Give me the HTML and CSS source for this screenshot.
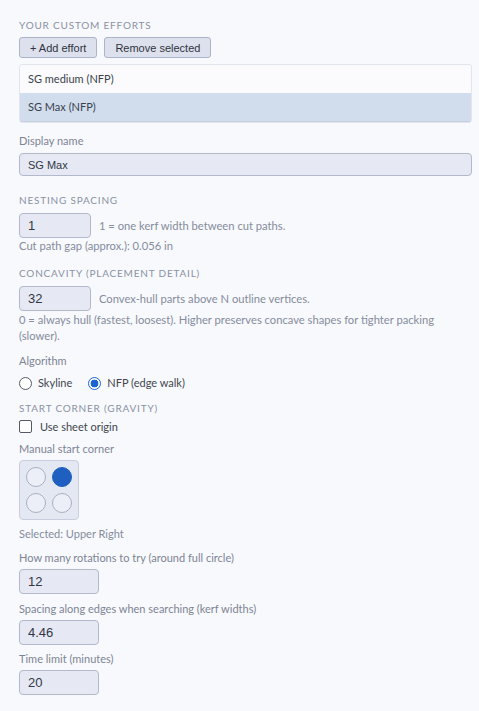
FILE: index.html
```html
<!DOCTYPE html>
<html lang="en">
<head>
<meta charset="utf-8">
<title>Custom efforts</title>
<link rel="stylesheet" href="styles.css">
</head>
<body>
<div class="panel">
  <h3 class="section-title first">Your custom efforts</h3>
  <div class="btn-row">
    <button class="btn">+ Add effort</button>
    <button class="btn">Remove selected</button>
  </div>
  <ul class="effort-list">
    <li class="effort-item">SG medium (NFP)</li>
    <li class="effort-item selected">SG Max (NFP)</li>
  </ul>

  <label class="field-label display-label">Display name</label>
  <input class="text-input wide" type="text" value="SG Max">

  <h3 class="section-title spaced">Nesting spacing</h3>
  <div class="inline-row">
    <input class="text-input small" type="text" value="1">
    <span class="hint">1 = one kerf width between cut paths.</span>
  </div>
  <p class="hint note gap-note">Cut path gap (approx.): 0.056 in</p>

  <h3 class="section-title">Concavity (placement detail)</h3>
  <div class="inline-row">
    <input class="text-input small" type="text" value="32">
    <span class="hint">Convex-hull parts above N outline vertices.</span>
  </div>
  <p class="hint note concavity-note">0 = always hull (fastest, loosest). Higher preserves concave shapes for tighter packing (slower).</p>

  <label class="field-label algo-label">Algorithm</label>
  <div class="radio-row">
    <label class="choice"><span class="radio"></span>Skyline</label>
    <label class="choice"><span class="radio on"></span>NFP (edge walk)</label>
  </div>

  <h3 class="section-title tight">Start corner (gravity)</h3>
  <label class="choice check-row"><span class="checkbox"></span>Use sheet origin</label>
  <label class="field-label corner-label">Manual start corner</label>
  <div class="corner-grid">
    <span class="dot"></span>
    <span class="dot on"></span>
    <span class="dot"></span>
    <span class="dot"></span>
  </div>
  <p class="hint selected-note">Selected: Upper Right</p>

  <label class="field-label">How many rotations to try (around full circle)</label>
  <input class="text-input medium" type="text" value="12">
  <label class="field-label">Spacing along edges when searching (kerf widths)</label>
  <input class="text-input medium" type="text" value="4.46">
  <label class="field-label last-label">Time limit (minutes)</label>
  <input class="text-input medium" type="text" value="20">
</div>
</body>
</html>
```
FILE: styles.css
```css
html, body {
  margin: 0;
  padding: 0;
  background: #f8f9fc;
}

body {
  font-family: Lato, "Open Sans", sans-serif;
  font-size: 11px;
  color: #3a3f4c;
}

.panel {
  padding: 18px 7px 16px 19px;
  display: flex;
  flex-direction: column;
  align-items: flex-start;
}

.section-title {
  margin: 0;
  font-size: 10px;
  font-weight: 400;
  letter-spacing: 0.8px;
  text-transform: uppercase;
  color: #8a91a3;
  line-height: 14px;
}

.section-title.spaced { margin-top: 17px; }
.section-title.tight { margin-top: 8px; }

.btn-row {
  display: flex;
  gap: 7px;
  margin-top: 5px;
}

.btn {
  font-family: "Liberation Sans", Arial, sans-serif;
  font-size: 11px;
  color: #2f3340;
  background: #dde1ed;
  border: 1px solid #aeb4c8;
  border-radius: 3px;
  height: 21px;
  padding: 0 10px;
}

.effort-list {
  list-style: none;
  margin: 6px 0 0;
  padding: 0;
  align-self: stretch;
  border: 1px solid #e2e5ec;
  border-radius: 3px;
  background: #fbfbfd;
  overflow: hidden;
}

.effort-item {
  height: 28px;
  line-height: 28px;
  padding: 0 8px;
  color: #3a3f4c;
}

.effort-item.selected {
  background: #d1ddec;
  border-bottom: 1px solid #c4cfe0;
}

.field-label {
  display: block;
  color: #7d8495;
  line-height: 16px;
  margin-top: 7px;
  margin-bottom: 3px;
}

.display-label { margin-top: 10px; margin-bottom: 4px; }
.algo-label { margin-top: 5px; margin-bottom: 4px; }
.corner-label { margin-top: 8px; margin-bottom: 3px; }
.last-label { margin-top: 6px; }

.text-input {
  box-sizing: border-box;
  font-family: "Liberation Sans", Arial, sans-serif;
  font-size: 11px;
  color: #333744;
  background: #e6e9f4;
  border: 1px solid #b3b8cc;
  border-radius: 4px;
  padding: 0 8px;
  margin: 0;
  outline: none;
}

.text-input.wide {
  align-self: stretch;
  height: 23px;
}

.text-input.small {
  width: 72px;
  height: 25px;
  font-size: 13px;
}

.text-input.medium {
  width: 80px;
  height: 25px;
  font-size: 13px;
}

.inline-row {
  display: flex;
  align-items: center;
  gap: 8px;
  margin-top: 6px;
}

.hint {
  font-size: 11.2px;
  color: #858c9d;
}

.note {
  line-height: 16px;
}

.gap-note { margin: 0 0 12px; }
.concavity-note { margin: 1px 0 4px; }

.radio-row {
  display: flex;
  gap: 16px;
  margin-top: 0;
  line-height: 20px;
}

.choice {
  display: flex;
  align-items: center;
  gap: 6px;
  font-size: 11px;
  color: #41464f;
}

.radio {
  box-sizing: border-box;
  width: 13px;
  height: 13px;
  border-radius: 50%;
  border: 1px solid #555a66;
  background: #fff;
}

.radio.on {
  border: 1px solid #1a66d2;
  background: radial-gradient(circle, #1a66d2 0 3.6px, #fff 4.2px);
}

.check-row {
  margin-top: 5px;
  gap: 8px;
}

.checkbox {
  box-sizing: border-box;
  width: 13px;
  height: 13px;
  border: 1px solid #555a66;
  border-radius: 2px;
  background: #fff;
}

.corner-grid {
  box-sizing: border-box;
  width: 60px;
  height: 60px;
  padding: 6px;
  display: grid;
  grid-template-columns: 20px 20px;
  grid-template-rows: 20px 20px;
  gap: 6px;
  background: #e4e8f2;
  border: 1px solid #c9cede;
  border-radius: 4px;
}

.dot {
  box-sizing: border-box;
  width: 20px;
  height: 20px;
  border-radius: 50%;
  border: 1px solid #aab0c2;
  background: #eceff7;
}

.dot.on {
  border-color: #1f5fbf;
  background: #1f5fbf;
}

.selected-note {
  margin: 6px 0 1px;
  line-height: 16px;
  font-size: 11px;
}
```
